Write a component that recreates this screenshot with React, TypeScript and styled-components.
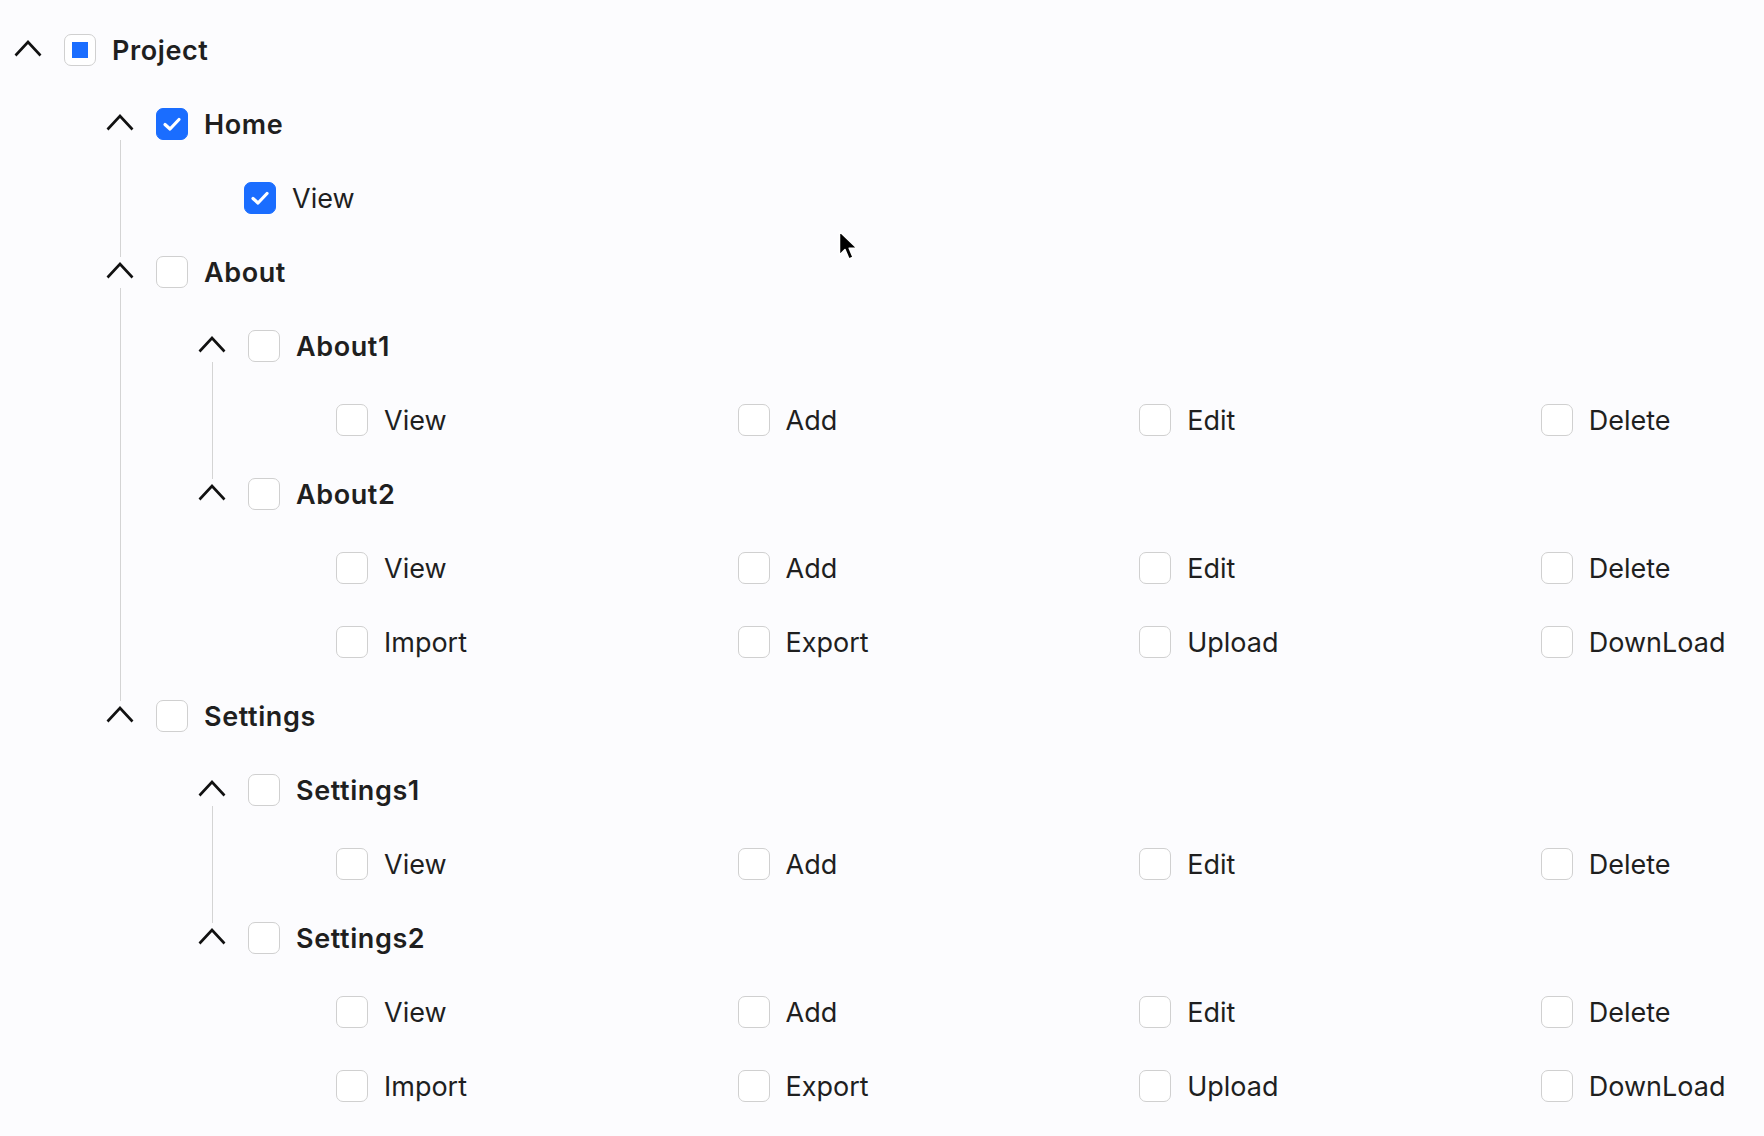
import React from "react";
import styled, { createGlobalStyle } from "styled-components";

const GlobalStyle = createGlobalStyle`
  html, body {
    margin: 0;
    background: #fcfcfe;
    overflow: hidden;
  }
  body {
    font-family: Inter, "Noto Sans", sans-serif;
    color: #1f1f1f;
  }
`;

type CheckState = "checked" | "unchecked" | "indeterminate";

type TreeNode = {
  title: string;
  state?: CheckState;
  children?: TreeNode[];
  leaves?: { title: string; state?: CheckState }[];
};

const perms = (...names: string[]) => names.map((title) => ({ title }));

const TREE: TreeNode[] = [
  {
    title: "Project",
    state: "indeterminate",
    children: [
      {
        title: "Home",
        state: "checked",
        leaves: [{ title: "View", state: "checked" }],
      },
      {
        title: "About",
        children: [
          { title: "About1", leaves: perms("View", "Add", "Edit", "Delete") },
          {
            title: "About2",
            leaves: perms("View", "Add", "Edit", "Delete", "Import", "Export", "Upload", "DownLoad"),
          },
        ],
      },
      {
        title: "Settings",
        children: [
          { title: "Settings1", leaves: perms("View", "Add", "Edit", "Delete") },
          {
            title: "Settings2",
            leaves: perms("View", "Add", "Edit", "Delete", "Import", "Export", "Upload", "DownLoad"),
          },
        ],
      },
    ],
  },
];

const Page = styled.div`
  position: relative;
  box-sizing: border-box;
  min-height: 1136px;
  padding: 13px 0 0 14px;
`;

const NodeWrap = styled.div`
  display: flex;
`;

const Rail = styled.div`
  width: 28px;
  flex-shrink: 0;
  display: flex;
  flex-direction: column;
  align-items: center;
`;

const Switcher = styled.div`
  height: 74px;
  display: flex;
  align-items: center;
  justify-content: center;
  svg {
    margin-top: -4px;
  }
`;

const Line = styled.div`
  flex: 1;
  width: 1px;
  background: #d4d4d4;
  margin: -21px 0 -22px;
`;

const Body = styled.div`
  flex: 1;
  display: flex;
  flex-direction: column;
  margin-left: 22px;
  min-width: 0;
`;

const Row = styled.div`
  height: 74px;
  display: flex;
  align-items: center;
  gap: 16px;
`;

const NodeLabel = styled.span`
  font-size: 27px;
  font-weight: 600;
  letter-spacing: 0.6px;
`;

const Children = styled.div`
  margin-left: 42px;
  display: flex;
  flex-direction: column;
`;

const LeafGrid = styled.div`
  display: grid;
  grid-template-columns: repeat(3, 401.6px) auto;
  grid-auto-rows: 74px;
  padding-left: 46px;
`;

const Leaf = styled.div`
  display: flex;
  align-items: center;
  gap: 16px;
`;

const LeafLabel = styled.span`
  font-size: 27px;
  font-weight: 400;
`;

const Box = styled.span<{ $state: CheckState }>`
  box-sizing: border-box;
  width: 32px;
  height: 32px;
  flex-shrink: 0;
  border-radius: 7px;
  display: flex;
  align-items: center;
  justify-content: center;
  border: 1.5px solid ${(p) => (p.$state === "checked" ? "#1a6dff" : "#d0d0d0")};
  background: ${(p) => (p.$state === "checked" ? "#1a6dff" : "#ffffff")};
`;

const InnerSquare = styled.span`
  width: 16px;
  height: 16px;
  background: #1a6dff;
`;

const Cursor = styled.svg`
  position: absolute;
  left: 838px;
  top: 230px;
`;

const Chevron = () => (
  <svg width="28" height="18" viewBox="0 0 28 18">
    <polyline points="1.5,16.5 14,3 26.5,16.5" fill="none" stroke="#111" strokeWidth="2.6" />
  </svg>
);

const Checkbox = ({ state = "unchecked" }: { state?: CheckState }) => (
  <Box $state={state}>
    {state === "checked" && (
      <svg width="20" height="16" viewBox="0 0 20 16">
        <polyline
          points="3,8.5 8,13 17,3.5"
          fill="none"
          stroke="#fff"
          strokeWidth="3.2"
          strokeLinecap="round"
          strokeLinejoin="round"
        />
      </svg>
    )}
    {state === "indeterminate" && <InnerSquare />}
  </Box>
);

const TreeItem = ({ node, hasNext }: { node: TreeNode; hasNext: boolean }) => {
  return (
    <NodeWrap>
      <Rail>
        <Switcher>
          <Chevron />
        </Switcher>
        {hasNext && <Line />}
      </Rail>
      <Body>
        <Row>
          <Checkbox state={node.state} />
          <NodeLabel>{node.title}</NodeLabel>
        </Row>
        {node.children && (
          <Children>
            {node.children.map((child, i) => (
              <TreeItem key={child.title} node={child} hasNext={i < node.children!.length - 1} />
            ))}
          </Children>
        )}
        {node.leaves && (
          <Children>
            <LeafGrid>
              {node.leaves.map((leaf) => (
                <Leaf key={leaf.title}>
                  <Checkbox state={leaf.state} />
                  <LeafLabel>{leaf.title}</LeafLabel>
                </Leaf>
              ))}
            </LeafGrid>
          </Children>
        )}
      </Body>
    </NodeWrap>
  );
};

export default function App() {
  return (
    <>
      <GlobalStyle />
      <Page>
        {TREE.map((node, i) => (
          <TreeItem key={node.title} node={node} hasNext={i < TREE.length - 1} />
        ))}
        <Cursor width="22" height="32" viewBox="0 0 22 32">
          <path
            d="M1.5 1.5 L1.5 25 L7 19.5 L11 29 L15 27.3 L11.2 18.2 L19 18.2 Z"
            fill="#000"
            stroke="#fff"
            strokeWidth="1.5"
            strokeLinejoin="round"
          />
        </Cursor>
      </Page>
    </>
  );
}
